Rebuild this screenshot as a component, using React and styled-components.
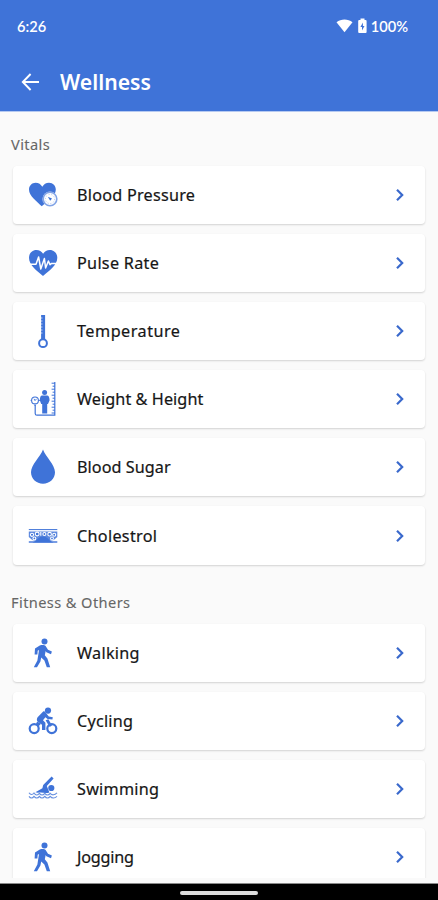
import React from 'react'
import styled, { createGlobalStyle } from 'styled-components'

const blue = '#3f73d8'

const GlobalStyle = createGlobalStyle`
	* {
		box-sizing: border-box;
	}
	body {
		margin: 0;
		background: #fafafa;
		font-family: 'Noto Sans', 'Open Sans', sans-serif;
	}
`

const Screen = styled.div`
	display: flex;
	flex-direction: column;
	width: 438px;
	height: 900px;
	overflow: hidden;
	background: #fafafa;
`

const Header = styled.header`
	flex: none;
	height: 112px;
	color: #fff;
	background: ${blue};
	border-bottom: 1px solid #b5c9f1;
`

const StatusBar = styled.div`
	display: flex;
	align-items: center;
	justify-content: space-between;
	height: 52px;
	padding: 0 30px 0 17px;
	font-family: Lato, sans-serif;
	font-size: 14.6px;
	font-weight: 600;
`

const StatusIcons = styled.div`
	display: flex;
	align-items: center;
`

const Percent = styled.span`
	margin-left: 1px;
`

const TitleBar = styled.div`
	display: flex;
	align-items: center;
	height: 60px;
	padding-left: 20px;
`

const Title = styled.h1`
	margin: 0 0 0 18px;
	font-size: 21.2px;
	font-weight: 600;
	line-height: 30px;
`

const List = styled.main`
	flex: none;
	height: 766px;
	overflow: hidden;
	padding: 0 13px;
`

const SectionTitle = styled.h2`
	display: flex;
	align-items: center;
	height: 30px;
	margin: ${(p) => p.$top}px 0 7px -2px;
	color: #666;
	font-size: 14.6px;
	font-weight: 400;
	letter-spacing: 0.4px;
	-webkit-text-stroke: 0.1px #666;
`

const Cards = styled.div`
	display: flex;
	flex-direction: column;
	gap: 10px;
`

const Card = styled.div`
	display: flex;
	align-items: center;
	height: 58.1px;
	padding: 0 17px 0 12px;
	background: #fff;
	border-radius: 4px;
	box-shadow: 0 1px 2px rgba(0, 0, 0, 0.16);
`

const Label = styled.span`
	flex: 1;
	margin-left: 16px;
	color: #161616;
	font-size: 16.2px;
	font-weight: 400;
	line-height: 22px;
	letter-spacing: ${(p) => p.$spacing}px;
	-webkit-text-stroke: 0.2px #161616;
`

const Glyph = styled.svg`
	flex: none;
	display: block;
	width: 36px;
	height: 36px;
	fill: ${blue};
	stroke: none;
`

const NavBar = styled.footer`
	display: flex;
	justify-content: center;
	height: 16px;
	margin-top: auto;
	padding-top: 7px;
	background: #000;
	box-shadow: 0 -1px 0 #8a8a8a;
`

const Handle = styled.div`
	width: 78px;
	height: 3.5px;
	border-radius: 2px;
	background: #ddd;
`

const line = { fill: 'none', stroke: blue }

const PressureIcon = () => (
	<>
		<path d="M16.7 29.3 C12 24.5 4 19 4 12.5 C4 8.5 7 5.7 10.6 5.7 C13.6 5.7 16 7.3 17.3 9.8 C18.6 7.3 21 5.7 24 5.7 C28 5.7 30.8 8.8 30.8 12.7 C30.8 19 22 24.5 16.7 29.3Z" />
		<circle cx="25" cy="22" r="7.6" fill="#fff" />
		<circle cx="25" cy="22" r="6.8" {...line} strokeWidth="1.6" opacity="0.65" />
		<circle cx="25" cy="22" r="4.6" {...line} strokeWidth="0.7" strokeDasharray="1.2 1.6" opacity="0.5" />
		<path d="M22.8 19.8 L27 21.6 L25.2 23.8Z" />
	</>
)

const PulseIcon = () => (
	<>
		<path d="M18 31 C12 25.8 4 20.5 4 12.8 C4 8.2 7.3 5 11.4 5 C14.2 5 16.7 6.5 18.1 8.8 C19.5 6.5 22 5 24.8 5 C29 5 32.3 8.3 32.3 12.8 C32.3 20.5 24 25.8 18 31Z" />
		<path
			d="M4 19.2 H11 L13.6 12 L15.8 24 L19.4 13.5 L20.6 23 L23.4 16 L25 19.8 L26.2 18.6 H32"
			fill="none"
			stroke="#fff"
			strokeWidth="1.5"
			strokeLinejoin="round"
		/>
	</>
)

const TemperatureIcon = () => (
	<>
		<path d="M16.1 2 H20.1 V26.4 H16.1Z" />
		<path d="M15.9 5 h1.6 M15.9 8 h1.6 M15.9 11 h1.6 M15.9 14 h1.6 M15.9 17 h1.6 M15.9 20 h1.6" stroke="#fff" strokeWidth="0.7" />
		<circle cx="18" cy="30.2" r="3.9" fill="#fff" stroke={blue} strokeWidth="2" />
	</>
)

const WeightIcon = () => (
	<>
		<path d="M29.8 1 V34.2 H12 Q10.2 34.2 10.2 32.4 V24" {...line} strokeWidth="1.2" />
		<path
			d="M26.6 2.2 H30 M27.6 5.2 H30 M26.6 8.2 H30 M27.6 11.2 H30 M26.6 14.2 H30 M27.6 17.2 H30 M26.6 20.2 H30 M27.6 23.2 H30 M26.6 26.2 H30 M27.6 29.2 H30 M26.6 32 H30"
			{...line}
			strokeWidth="1"
		/>
		<circle cx="10" cy="19.4" r="3.4" {...line} strokeWidth="1.1" />
		<path d="M9 17.8 L10 19.6 L11.6 17.8 M6.8 19.4 H5.6 M13.4 19.4 H15 M10 23 V25" {...line} strokeWidth="0.9" />
		<circle cx="19.6" cy="11.4" r="2.5" />
		<path d="M17 14.6 H22.2 C23.4 14.6 24.4 16 24.6 19.2 L23 23 H22.2 V32.4 H17.2 V23 H16.2 L14.8 19.2 C15 16 15.8 14.6 17 14.6Z" />
	</>
)

const DropIcon = () => (
	<path d="M18 0.4 C20.5 7.4 30 15.5 30 23.3 C30 29.8 24.6 34.8 18 34.8 C11.4 34.8 6 29.8 6 23.3 C6 15.5 15.5 7.4 18 0.4Z" />
)

const CholesterolIcon = () => (
	<>
		<path d="M3.8 11.6 H32.3" {...line} strokeWidth="1" />
		<path d="M3.8 24 H32.3" {...line} strokeWidth="1.4" />
		<path d="M3.8 13.4 H32.3 V19 Q29 22.6 26 22.8 H10 Q7 22.6 3.8 19Z" opacity="0.85" />
		<g fill={blue} stroke="#fff" strokeWidth="1.1">
			<circle cx="7" cy="16.8" r="1.6" />
			<circle cx="12.2" cy="16" r="1.9" />
			<circle cx="9.4" cy="20.4" r="1.4" />
			<circle cx="19.4" cy="16" r="1.5" />
			<circle cx="24.6" cy="16.2" r="1.8" />
			<circle cx="29.2" cy="16.8" r="1.5" />
			<circle cx="27" cy="20.4" r="1.4" />
			<path d="M15.8 14 V17.8" />
		</g>
		<path d="M7.5 24.4 C12 23.4 13 18.6 18 18.6 C23 18.6 24 23.4 28.5 24.4Z" />
	</>
)

const WalkIcon = () => (
	<>
		<circle cx="19.5" cy="6.4" r="3" />
		<path d="M14.8 10.4 C17 9.7 19.6 9.8 20.6 11 L23 14.8 L26.9 16.6 L26 19.2 L21.4 17.2 L20.7 16 L19.8 20.2 L22.4 23.4 L25.2 32.2 H21.8 L19.4 25.6 L16.2 22.6 L15.4 26.4 L12 32.2 H8.8 L12.4 25.4 L14 15 L12.7 15.8 L12.4 19.6 H9.6 L10 13.6Z" />
	</>
)

const BikeIcon = () => (
	<>
		<circle cx="9.2" cy="25.6" r="4.5" {...line} strokeWidth="2.2" />
		<circle cx="26.8" cy="25.6" r="4.5" {...line} strokeWidth="2.2" />
		<circle cx="23" cy="7.6" r="3.1" />
		<path d="M18.2 8.4 C19.6 7.8 20.6 8.8 21.4 10.6 L23.8 13.4 L27.8 14.2 L27.4 16.6 L22.6 16 L20.4 14.2 L18 17.2 L20.4 19.8 V27 H17 V21.8 L12.6 18.6 C11.6 17.6 11.6 15.8 12.6 14.2Z" />
		<path d="M20.6 17.2 L23.4 16.2 L27 22.6 L24.6 24Z" />
		<path d="M12.2 18.6 L16 20.8 L13.4 23.4 L10.8 21.2Z" />
	</>
)

const SwimIcon = () => (
	<>
		<circle cx="26.3" cy="17" r="3.1" />
		<path d="M26.6 5.6 L28.6 7.6 L21.8 15 L24.4 21.4 C20 22.8 17.4 20.8 12.8 21.8 L10.4 21.2 L17.4 17.2 L18.2 14Z" />
		<g {...line} strokeWidth="1.1" opacity="0.8">
			<path d="M4 21.8 C5.5 24 7.5 24 9 22 C10.8 24.6 12.8 24.6 14.4 22.4 C16 24.6 18 24.6 19.8 22.4 C21.4 24.6 23.6 24.6 25.2 22.4 C27 24.4 29.6 24.4 32 21.8" />
			<path d="M4 25.4 C5.5 27.6 7.5 27.6 9 25.4 C10.8 27.6 12.8 27.6 14.4 25.4 C16 27.6 18 27.6 19.8 25.4 C21.4 27.6 23.6 27.6 25.2 25.4 C27 27.6 29.6 27.6 32 25.4" />
		</g>
	</>
)

const vitals = [
	{ name: 'Blood Pressure', icon: PressureIcon, spacing: 0.25 },
	{ name: 'Pulse Rate', icon: PulseIcon, spacing: 0.3 },
	{ name: 'Temperature', icon: TemperatureIcon, spacing: 0.5 },
	{ name: 'Weight & Height', icon: WeightIcon, spacing: 0.08 },
	{ name: 'Blood Sugar', icon: DropIcon, spacing: 0.05 },
	{ name: 'Cholestrol', icon: CholesterolIcon, spacing: 0.3 },
]

const fitness = [
	{ name: 'Walking', icon: WalkIcon, spacing: 0.3 },
	{ name: 'Cycling', icon: BikeIcon, spacing: 0.22 },
	{ name: 'Swimming', icon: SwimIcon, spacing: 0.25 },
	{ name: 'Jogging', icon: WalkIcon, spacing: -0.2 },
]

const CardList = ({ items }) => (
	<Cards>
		{items.map(({ name, icon: Icon, spacing }) => (
			<Card key={name}>
				<Glyph viewBox="0 0 36 36">
					<Icon />
				</Glyph>
				<Label $spacing={spacing}>{name}</Label>
				<svg width="16" height="16" viewBox="0 0 16 16" fill="none" stroke="#3a69cc" strokeWidth="2.2">
					<path d="M5 2.8 L10.2 8 L5 13.2" />
				</svg>
			</Card>
		))}
	</Cards>
)

const App = () => {
	return (
		<>
			<GlobalStyle />
			<Screen>
				<Header>
					<StatusBar>
						<span>6:26</span>
						<StatusIcons>
							<svg width="18" height="16" viewBox="0 0 18 16" fill="#fff">
								<path d="M0.5 4.2 C5 0.6 12 0.6 16.5 4.2 L8.5 14.2Z" />
							</svg>
							<svg width="16" height="16" viewBox="0 0 16 16" fill="#fff">
								<path d="M6.5 0.6 H10.5 V2 H11.6 Q12.6 2 12.6 3 V14 Q12.6 15 11.6 15 H5.2 Q4.2 15 4.2 14 V3 Q4.2 2 5.2 2 H6.5Z" />
								<path d="M8.9 4.6 L6.4 9 H8 V12.6 L10.5 8 H8.9Z" fill={blue} />
							</svg>
							<Percent>100%</Percent>
						</StatusIcons>
					</StatusBar>
					<TitleBar>
						<svg width="22" height="22" viewBox="0 0 22 22" fill="none" stroke="#fff" strokeWidth="1.9">
							<path d="M19 11 H3 M10.6 3 L2.8 11 L10.6 19" />
						</svg>
						<Title>Wellness</Title>
					</TitleBar>
				</Header>
				<List>
					<SectionTitle $top={17}>Vitals</SectionTitle>
					<CardList items={vitals} />
					<SectionTitle $top={22}>Fitness &amp; Others</SectionTitle>
					<CardList items={fitness} />
				</List>
				<NavBar>
					<Handle />
				</NavBar>
			</Screen>
		</>
	)
}

export default App
